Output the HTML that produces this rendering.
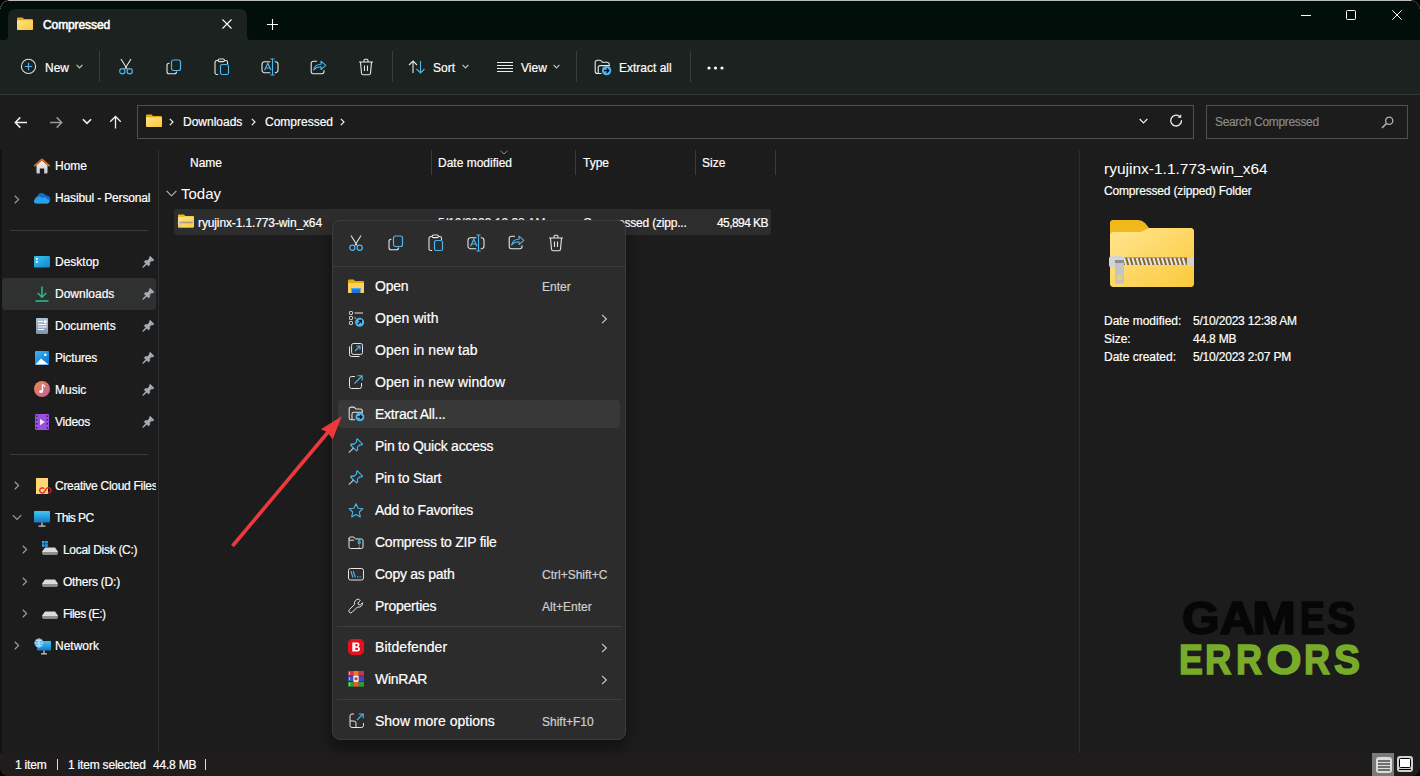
<!DOCTYPE html>
<html><head><meta charset="utf-8">
<style>
*{margin:0;padding:0;box-sizing:border-box}
html,body{width:1420px;height:776px;overflow:hidden;background:#1b1c1b;-webkit-font-smoothing:antialiased;font-family:"Liberation Sans",sans-serif;color:#fff}
.a{position:absolute}
.t{position:absolute;white-space:nowrap;font-size:12px;line-height:12px;color:#fff;-webkit-text-stroke:0.2px currentColor}
svg{position:absolute;overflow:visible}
.sep{position:absolute;width:1px;background:#3b3e3c}
</style></head><body>
<!-- title / tab strip -->
<div class="a" style="left:0;top:0;width:1420px;height:40px;background:#010e0a"></div>
<div class="a" style="left:8px;top:0;width:1404px;height:1px;background:#bcbcbc"></div>
<div class="a" style="left:8px;top:9px;width:239px;height:31px;background:#1c221f;border-radius:7px 7px 0 0"></div><svg style="left:4px;top:36px" width="4" height="4" viewBox="0 0 4 4"><path d="M4 0V4H0A4 4 0 0 0 4 0Z" fill="#1c221f"/></svg><svg style="left:247px;top:36px" width="4" height="4" viewBox="0 0 4 4"><path d="M0 0V4H4A4 4 0 0 1 0 0Z" fill="#1c221f"/></svg>
<!-- command bar -->
<div class="a" style="left:0;top:40px;width:1420px;height:54px;background:#1c221f"></div>
<div class="a" style="left:0;top:94px;width:1420px;height:1px;background:#363837"></div>
<!-- address row -->
<div class="a" style="left:0;top:95px;width:1420px;height:53px;background:#1b1c1b"></div>
<div class="a" style="left:137px;top:105px;width:1057px;height:34px;border:1px solid #4f4f4f"></div>
<div class="a" style="left:1206px;top:105px;width:202px;height:34px;border:1px solid #4f4f4f"></div>
<!-- main -->
<div class="a" style="left:158px;top:150px;width:1px;height:603px;background:#2e2e2e"></div>
<div class="a" style="left:1079px;top:150px;width:1px;height:603px;background:#2e2e2e"></div>
<div class="a" style="left:0;top:150px;width:2px;height:626px;background:#121212"></div>
<!-- status bar -->
<div class="a" style="left:0;top:753px;width:1420px;height:23px;background:#1c1b1b;background-image:repeating-conic-gradient(#211f1f 0 25%,#1b1b1b 0 50%);background-size:2px 2px"></div>

<svg style="left:17px;top:17px" width="16" height="13" viewBox="0 0 16 13">
<defs><linearGradient id="fg" x1="0" y1="0" x2="1" y2="1"><stop offset="0" stop-color="#ffe28a"/><stop offset="1" stop-color="#f9c937"/></linearGradient></defs>
<path d="M1 0.5h4.5l1.5 1.5h8a0.8 0.8 0 0 1 .8.8V12a1 1 0 0 1-1 1H1a1 1 0 0 1-1-1V1.5a1 1 0 0 1 1-1z" fill="#e9a90d"/>
<path d="M0 3.2h16V12a1 1 0 0 1-1 1H1a1 1 0 0 1-1-1z" fill="url(#fg)"/></svg>
<div class="t" style="left:43px;top:19px;-webkit-text-stroke:0.55px #fff;letter-spacing:-0.1px">Compressed</div>
<svg style="left:222px;top:19px" width="10" height="10" viewBox="0 0 10 10"><path d="M0.5 0.5L9.5 9.5M9.5 0.5L0.5 9.5" stroke="#fff" stroke-width="1.1"/></svg>
<svg style="left:267px;top:19px" width="11" height="11" viewBox="0 0 11 11"><path d="M5.5 0V11M0 5.5H11" stroke="#fff" stroke-width="1.1"/></svg>
<div class="a" style="left:1301px;top:15px;width:10px;height:1px;background:#fff"></div>
<div class="a" style="left:1346px;top:10px;width:10px;height:10px;border:1px solid #fff;border-radius:1.5px"></div>
<svg style="left:1392px;top:10px" width="10" height="10" viewBox="0 0 10 10"><path d="M0.3 0.3L9.7 9.7M9.7 0.3L0.3 9.7" stroke="#fff" stroke-width="1"/></svg>

<svg style="left:20px;top:58px" width="17" height="17" viewBox="0 0 17 17"><circle cx="8.5" cy="8.4" r="7.1" fill="none" stroke="#e0e0e0" stroke-width="1.1"/><path d="M8.5 4.8V12.2M4.8 8.5H12.2" stroke="#4cb6ee" stroke-width="1.2"/></svg>
<div class="t" style="left:45px;top:62px">New</div>
<svg style="left:76px;top:64px" width="7" height="5" viewBox="0 0 7 5"><path d="M0.6 0.9L3.5 3.8L6.4 0.9" fill="none" stroke="#c4c4c4" stroke-width="1.2"/></svg>
<div class="sep" style="left:99px;top:51px;height:31px"></div>
<svg style="left:118px;top:58px" width="16" height="17" viewBox="0 0 16 17"><path d="M3 1L9.2 11M13 1L6.8 11" stroke="#e8e8e8" stroke-width="1.1" fill="none"/><circle cx="4.3" cy="13.3" r="2.6" fill="none" stroke="#4cb6ee" stroke-width="1.2"/><circle cx="11.7" cy="13.3" r="2.6" fill="none" stroke="#4cb6ee" stroke-width="1.2"/></svg>
<svg style="left:166px;top:59px" width="16" height="16" viewBox="0 0 16 16"><path d="M3.5 4.2H3a2 2 0 0 0-2 2V12.8a2 2 0 0 0 2 2h5.5a2 2 0 0 0 2-2v-0.4" fill="none" stroke="#e8e8e8" stroke-width="1.1"/><rect x="5.5" y="1" width="9" height="10.5" rx="2" fill="none" stroke="#4cb6ee" stroke-width="1.2"/></svg>
<svg style="left:214px;top:58px" width="16" height="18" viewBox="0 0 16 18"><path d="M4.2 16.5H2.8a1.8 1.8 0 0 1-1.8-1.8V4.3a1.8 1.8 0 0 1 1.8-1.8h1.2M10.5 2.5h1.2a1.8 1.8 0 0 1 1.8 1.8V6" fill="none" stroke="#e8e8e8" stroke-width="1.1"/><rect x="4.2" y="1" width="6.2" height="2.6" rx="1.2" fill="none" stroke="#e8e8e8" stroke-width="1.1"/><rect x="6.5" y="6.5" width="8" height="10" rx="1.8" fill="none" stroke="#4cb6ee" stroke-width="1.2"/></svg>
<svg style="left:261px;top:58px" width="18" height="18" viewBox="0 0 18 18"><path d="M9.3 3.7H3.5a2.5 2.5 0 0 0-2.5 2.5V12.2a2.5 2.5 0 0 0 2.5 2.5H9.3M13.7 3.7H14.5a2.5 2.5 0 0 1 2.5 2.5V12.2a2.5 2.5 0 0 1-2.5 2.5H13.7" fill="none" stroke="#e8e8e8" stroke-width="1.1"/><path d="M3.6 12.3L6.8 5.2L10 12.3M4.8 10H8.8" fill="none" stroke="#4cb6ee" stroke-width="1.15"/><path d="M11.5 1V17M9.4 1H13.6M9.4 17H13.6" stroke="#4cb6ee" stroke-width="1.1"/></svg>
<svg style="left:310px;top:60px" width="17" height="15" viewBox="0 0 17 15"><path d="M7 1.3H3.3A2.1 2.1 0 0 0 1.2 3.4V11.6A2.1 2.1 0 0 0 3.3 13.7H11.9A2.1 2.1 0 0 0 14 11.6V10.3" fill="none" stroke="#e8e8e8" stroke-width="1.1"/><path d="M3.6 10C4.6 6.2 7.4 4.2 11 4.3V1.2L15.8 5.3L11 9.5V6.8C8 6.7 5.6 7.7 3.6 10Z" fill="none" stroke="#4cb6ee" stroke-width="1.1" stroke-linejoin="round"/></svg>
<svg style="left:358px;top:58px" width="16" height="18" viewBox="0 0 16 18"><path d="M1 4H15M6 4V2.5a1.2 1.2 0 0 1 1.2-1.2h1.6A1.2 1.2 0 0 1 10 2.5V4M2.5 4L3.5 15.2a1.8 1.8 0 0 0 1.8 1.6h5.4a1.8 1.8 0 0 0 1.8-1.6L13.5 4M6.5 7.5v5.5M9.5 7.5v5.5" fill="none" stroke="#e8e8e8" stroke-width="1.1"/></svg>
<div class="sep" style="left:392px;top:51px;height:31px"></div>
<svg style="left:408px;top:60px" width="18" height="14" viewBox="0 0 18 14"><path d="M5 13V1.2M1 5L5 1L9 5" fill="none" stroke="#e8e8e8" stroke-width="1.1"/><path d="M12.5 1V12.8M8.5 9L12.5 13L16.5 9" fill="none" stroke="#4cb6ee" stroke-width="1.1"/></svg>
<div class="t" style="left:433px;top:62px">Sort</div>
<svg style="left:462px;top:64px" width="7" height="5" viewBox="0 0 7 5"><path d="M0.6 0.9L3.5 3.8L6.4 0.9" fill="none" stroke="#c4c4c4" stroke-width="1.2"/></svg>
<svg style="left:497px;top:61px" width="16" height="12" viewBox="0 0 16 12"><path d="M0 1.5H16M0 4.5H16M0 7.5H16M0 10.5H16" stroke="#ececec" stroke-width="1.1"/></svg>
<div class="t" style="left:521px;top:62px">View</div>
<svg style="left:553px;top:64px" width="7" height="5" viewBox="0 0 7 5"><path d="M0.6 0.9L3.5 3.8L6.4 0.9" fill="none" stroke="#c4c4c4" stroke-width="1.2"/></svg>
<div class="sep" style="left:576px;top:51px;height:31px"></div>
<svg style="left:594px;top:59px" width="18" height="17" viewBox="0 0 18 17"><path d="M7.5 14.5H3.2A2 2 0 0 1 1.2 12.5V3.2A2 2 0 0 1 3.2 1.2H5.8Q6.6 1.2 7.3 2L8.3 3.2H13.2A2 2 0 0 1 15.2 5.2V7.2" fill="none" stroke="#e8e8e8" stroke-width="1.1"/><path d="M4.2 14.3V8.6A2 2 0 0 1 6.2 6.6H15.3" fill="none" stroke="#e8e8e8" stroke-width="1.1"/><circle cx="12.6" cy="11.6" r="4.7" fill="#4cb6ee"/><path d="M10 11.6H14.8M12.7 9.5L14.8 11.6L12.7 13.7" fill="none" stroke="#000" stroke-width="1.3"/></svg>
<div class="t" style="left:619px;top:62px">Extract all</div>
<div class="sep" style="left:690px;top:51px;height:31px"></div>
<svg style="left:707px;top:66px" width="17" height="4" viewBox="0 0 17 4"><circle cx="2" cy="2" r="1.6" fill="#fff"/><circle cx="8.5" cy="2" r="1.6" fill="#fff"/><circle cx="15" cy="2" r="1.6" fill="#fff"/></svg>

<svg style="left:14px;top:116px" width="14" height="13" viewBox="0 0 14 13"><path d="M13 6.5H1.8M6.3 1.4L1.3 6.5L6.3 11.6" fill="none" stroke="#f0f0f0" stroke-width="1.5"/></svg>
<svg style="left:49px;top:116px" width="14" height="13" viewBox="0 0 14 13"><path d="M1 6.5H12.2M7.7 1.4L12.7 6.5L7.7 11.6" fill="none" stroke="#9a9a9a" stroke-width="1.5"/></svg>
<svg style="left:82px;top:118px" width="10" height="7" viewBox="0 0 10 7"><path d="M0.9 1.2L5 5.3L9.1 1.2" fill="none" stroke="#f0f0f0" stroke-width="1.6"/></svg>
<svg style="left:109px;top:115px" width="13" height="14" viewBox="0 0 13 14"><path d="M6.5 13.5V1.5M1.2 6.8L6.5 1.5L11.8 6.8" fill="none" stroke="#f0f0f0" stroke-width="1.3"/></svg>
<svg style="left:146px;top:114px" width="16" height="13" viewBox="0 0 16 13">
<path d="M1 0.5h4.5l1.5 1.5h8a0.8 0.8 0 0 1 .8.8V12a1 1 0 0 1-1 1H1a1 1 0 0 1-1-1V1.5a1 1 0 0 1 1-1z" fill="#e9a90d"/>
<path d="M0 3.2h16V12a1 1 0 0 1-1 1H1a1 1 0 0 1-1-1z" fill="url(#fg)"/></svg>
<svg style="left:169px;top:118px" width="5" height="8" viewBox="0 0 5 8"><path d="M0.8 0.8L4 4L0.8 7.2" fill="none" stroke="#f0f0f0" stroke-width="1.2"/></svg>
<div class="t" style="left:183px;top:116px">Downloads</div>
<svg style="left:251px;top:118px" width="5" height="8" viewBox="0 0 5 8"><path d="M0.8 0.8L4 4L0.8 7.2" fill="none" stroke="#f0f0f0" stroke-width="1.2"/></svg>
<div class="t" style="left:265px;top:116px">Compressed</div>
<svg style="left:340px;top:118px" width="5" height="8" viewBox="0 0 5 8"><path d="M0.8 0.8L4 4L0.8 7.2" fill="none" stroke="#f0f0f0" stroke-width="1.2"/></svg>
<svg style="left:1139px;top:118px" width="9" height="6" viewBox="0 0 9 6"><path d="M0.7 1L4.5 4.8L8.3 1" fill="none" stroke="#f0f0f0" stroke-width="1.2"/></svg>
<svg style="left:1170px;top:114px" width="13" height="13" viewBox="0 0 13 13"><path d="M9.4 2.3A5.4 5.4 0 1 0 11.5 6.2" fill="none" stroke="#f0f0f0" stroke-width="1.3"/><path d="M11.2 0.2V3.8H7.6Z" fill="#f0f0f0"/></svg>
<div class="t" style="left:1215px;top:116px;color:#8a8a8a;letter-spacing:-0.33px">Search Compressed</div>
<svg style="left:1381px;top:116px" width="13" height="13" viewBox="0 0 13 13"><circle cx="8.2" cy="4.8" r="3.6" fill="none" stroke="#b0b0b0" stroke-width="1.3"/><path d="M5.6 7.4L1 12" stroke="#b0b0b0" stroke-width="1.6"/></svg>

<div class="a" style="left:2px;top:278px;width:154px;height:32px;background:#2f3030;border-radius:3px"></div>
<svg style="left:34px;top:158px" width="16" height="16" viewBox="0 0 16 16"><defs><linearGradient id="hb" x1="0" y1="0" x2="0" y2="1"><stop offset="0" stop-color="#f2f2f2"/><stop offset="1" stop-color="#c9c9c9"/></linearGradient></defs><path d="M2.5 7.2L8 2.6L13.5 7.2V14.6a0.9 0.9 0 0 1-0.9 0.9H10.2V10.6H5.8V15.5H3.4a0.9 0.9 0 0 1-0.9-0.9z" fill="url(#hb)"/><path d="M0.8 7.6L8 1.4L15.2 7.6" fill="none" stroke="#ea6a1f" stroke-width="1.8" stroke-linecap="round" stroke-linejoin="round"/></svg>
<div class="t" style="left:55px;top:160px">Home</div>
<svg style="left:14px;top:195px" width="6" height="9" viewBox="0 0 6 9"><path d="M0.8 0.8L4.6 4.5L0.8 8.2" fill="none" stroke="#9a9a9a" stroke-width="1.2"/></svg>
<svg style="left:34px;top:192px" width="16" height="12" viewBox="0 0 16 12"><path d="M4 11.5A3.5 3.5 0 0 1 3.4 4.6A4.6 4.6 0 0 1 12 3.6A3.6 3.6 0 0 1 12.6 11.5Z" fill="#0f6fc6"/><path d="M2 11.5A2.3 2.3 0 0 1 1.6 7A3.6 3.6 0 0 1 8.2 6.2A2.9 2.9 0 0 1 13.2 7.2A2.2 2.2 0 0 1 13.8 11.5Z" fill="#2aa0ea"/></svg>
<div class="t" style="left:55px;top:192px;letter-spacing:-0.15px">Hasibul - Personal</div>
<div class="a" style="left:10px;top:230px;width:138px;height:1px;background:#3a3a3a"></div>
<svg style="left:34px;top:256px" width="16" height="12" viewBox="0 0 16 12"><defs><linearGradient id="dk" x1="0" y1="0" x2="1" y2="1"><stop offset="0" stop-color="#35c6f2"/><stop offset="1" stop-color="#1482d0"/></linearGradient></defs><rect x="0" y="0" width="16" height="11.5" rx="1.2" fill="url(#dk)"/><rect x="2" y="2" width="1.8" height="1.8" fill="#fff"/><rect x="2" y="5" width="1.8" height="1.8" fill="#fff"/></svg>
<div class="t" style="left:55px;top:256px">Desktop</div>
<svg style="left:142px;top:256px" width="12" height="12" viewBox="0 0 12 12"><path d="M8.2 0.2L12 4L10.9 4.9L9.6 4.8L7.6 6.8L7.8 8.8L6.5 10.1L2.1 5.7L3.4 4.4L5.4 4.6L7.4 2.6L7.3 1.3Z" fill="#a6adb4" stroke="#a6adb4" stroke-width="0.5" stroke-linejoin="round"/><path d="M4.4 7.8L1.2 11" stroke="#a6adb4" stroke-width="1.5" stroke-linecap="round"/></svg>
<svg style="left:35px;top:286px" width="14" height="16" viewBox="0 0 14 16"><path d="M7 0.5V11M2.8 7L7 11.2L11.2 7" fill="none" stroke="#2db88f" stroke-width="1.5"/><path d="M0.5 15H13.5" stroke="#2db88f" stroke-width="1.6"/></svg>
<div class="t" style="left:55px;top:288px">Downloads</div>
<svg style="left:142px;top:288px" width="12" height="12" viewBox="0 0 12 12"><path d="M8.2 0.2L12 4L10.9 4.9L9.6 4.8L7.6 6.8L7.8 8.8L6.5 10.1L2.1 5.7L3.4 4.4L5.4 4.6L7.4 2.6L7.3 1.3Z" fill="#a6adb4" stroke="#a6adb4" stroke-width="0.5" stroke-linejoin="round"/><path d="M4.4 7.8L1.2 11" stroke="#a6adb4" stroke-width="1.5" stroke-linecap="round"/></svg>
<svg style="left:36px;top:318px" width="12" height="16" viewBox="0 0 12 16"><defs><linearGradient id="dc" x1="0" y1="0" x2="0" y2="1"><stop offset="0" stop-color="#b4c4d8"/><stop offset="1" stop-color="#7d93b0"/></linearGradient></defs><rect x="0" y="0" width="12" height="16" rx="1.2" fill="url(#dc)"/><rect x="2" y="3" width="5" height="1" fill="#fff"/><rect x="8" y="2.5" width="2.5" height="2.5" fill="#fff"/><rect x="2" y="6" width="8.5" height="1" fill="#fff"/><rect x="2" y="8.5" width="8.5" height="1" fill="#fff"/><rect x="2" y="11" width="6" height="1" fill="#fff"/></svg>
<div class="t" style="left:55px;top:320px">Documents</div>
<svg style="left:142px;top:320px" width="12" height="12" viewBox="0 0 12 12"><path d="M8.2 0.2L12 4L10.9 4.9L9.6 4.8L7.6 6.8L7.8 8.8L6.5 10.1L2.1 5.7L3.4 4.4L5.4 4.6L7.4 2.6L7.3 1.3Z" fill="#a6adb4" stroke="#a6adb4" stroke-width="0.5" stroke-linejoin="round"/><path d="M4.4 7.8L1.2 11" stroke="#a6adb4" stroke-width="1.5" stroke-linecap="round"/></svg>
<svg style="left:35px;top:351px" width="14" height="14" viewBox="0 0 14 14"><defs><linearGradient id="pc" x1="0" y1="0" x2="1" y2="1"><stop offset="0" stop-color="#3bb5f5"/><stop offset="1" stop-color="#0b6fcf"/></linearGradient></defs><rect width="14" height="14" rx="1" fill="url(#pc)"/><path d="M0.5 13.5L6 7.5L13.5 13.5Z" fill="#fff"/><circle cx="10.3" cy="3.7" r="1.3" fill="#fff"/></svg>
<div class="t" style="left:55px;top:352px;letter-spacing:-0.15px">Pictures</div>
<svg style="left:142px;top:352px" width="12" height="12" viewBox="0 0 12 12"><path d="M8.2 0.2L12 4L10.9 4.9L9.6 4.8L7.6 6.8L7.8 8.8L6.5 10.1L2.1 5.7L3.4 4.4L5.4 4.6L7.4 2.6L7.3 1.3Z" fill="#a6adb4" stroke="#a6adb4" stroke-width="0.5" stroke-linejoin="round"/><path d="M4.4 7.8L1.2 11" stroke="#a6adb4" stroke-width="1.5" stroke-linecap="round"/></svg>
<svg style="left:34px;top:381px" width="16" height="16" viewBox="0 0 16 16"><defs><linearGradient id="mu" x1="0" y1="0" x2="1" y2="1"><stop offset="0" stop-color="#f08a4f"/><stop offset="1" stop-color="#c45a9a"/></linearGradient></defs><circle cx="8" cy="8" r="8" fill="url(#mu)"/><path d="M8.5 3.5V10.2" stroke="#fff" stroke-width="1.4"/><path d="M8.5 3.5Q10.5 4.2 10.8 6" fill="none" stroke="#fff" stroke-width="1.2"/><ellipse cx="7" cy="10.5" rx="1.9" ry="1.6" fill="#fff"/></svg>
<div class="t" style="left:55px;top:384px">Music</div>
<svg style="left:142px;top:384px" width="12" height="12" viewBox="0 0 12 12"><path d="M8.2 0.2L12 4L10.9 4.9L9.6 4.8L7.6 6.8L7.8 8.8L6.5 10.1L2.1 5.7L3.4 4.4L5.4 4.6L7.4 2.6L7.3 1.3Z" fill="#a6adb4" stroke="#a6adb4" stroke-width="0.5" stroke-linejoin="round"/><path d="M4.4 7.8L1.2 11" stroke="#a6adb4" stroke-width="1.5" stroke-linecap="round"/></svg>
<svg style="left:35px;top:414px" width="14" height="16" viewBox="0 0 14 16"><rect width="14" height="16" rx="1" fill="#9b4fe0"/><g fill="#3b1a66"><rect x="1" y="1.5" width="1.5" height="1.5"/><rect x="1" y="5" width="1.5" height="1.5"/><rect x="1" y="9" width="1.5" height="1.5"/><rect x="1" y="13" width="1.5" height="1.5"/><rect x="11.5" y="1.5" width="1.5" height="1.5"/><rect x="11.5" y="5" width="1.5" height="1.5"/><rect x="11.5" y="9" width="1.5" height="1.5"/><rect x="11.5" y="13" width="1.5" height="1.5"/></g><path d="M5 4.8L9.8 8L5 11.2Z" fill="#eee"/></svg>
<div class="t" style="left:55px;top:416px;letter-spacing:-0.25px">Videos</div>
<svg style="left:142px;top:416px" width="12" height="12" viewBox="0 0 12 12"><path d="M8.2 0.2L12 4L10.9 4.9L9.6 4.8L7.6 6.8L7.8 8.8L6.5 10.1L2.1 5.7L3.4 4.4L5.4 4.6L7.4 2.6L7.3 1.3Z" fill="#a6adb4" stroke="#a6adb4" stroke-width="0.5" stroke-linejoin="round"/><path d="M4.4 7.8L1.2 11" stroke="#a6adb4" stroke-width="1.5" stroke-linecap="round"/></svg>
<div class="a" style="left:10px;top:454px;width:138px;height:1px;background:#3a3a3a"></div>
<svg style="left:14px;top:481px" width="6" height="9" viewBox="0 0 6 9"><path d="M0.8 0.8L4.6 4.5L0.8 8.2" fill="none" stroke="#9a9a9a" stroke-width="1.2"/></svg>
<svg style="left:36px;top:478px" width="15" height="16" viewBox="0 0 15 16"><rect width="12" height="16" fill="#fcd774"/><path d="M8.2 10.6A2.6 2.6 0 1 0 8.6 13.6L10.6 10.4A2.6 2.6 0 1 1 11.8 14.8" fill="none" stroke="#ec1c24" stroke-width="1.3"/></svg>
<div class="t" style="left:55px;top:480px;width:101px;overflow:hidden;letter-spacing:-0.28px">Creative Cloud Files</div>
<svg style="left:12px;top:514px" width="10" height="7" viewBox="0 0 10 7"><path d="M0.8 1.2L5 5.4L9.2 1.2" fill="none" stroke="#9a9a9a" stroke-width="1.2"/></svg>
<svg style="left:34px;top:511px" width="16" height="16" viewBox="0 0 16 16"><defs><linearGradient id="pcm" x1="0" y1="0" x2="0" y2="1"><stop offset="0" stop-color="#41c8f4"/><stop offset="1" stop-color="#1577c9"/></linearGradient></defs><rect width="16" height="11.5" rx="0.8" fill="url(#pcm)"/><path d="M8 11.5V15M4.5 15.2H11.5" stroke="#c8c8c8" stroke-width="1.3"/></svg>
<div class="t" style="left:55px;top:512px;letter-spacing:-0.6px">This PC</div>
<svg style="left:22px;top:545px" width="6" height="9" viewBox="0 0 6 9"><path d="M0.8 0.8L4.6 4.5L0.8 8.2" fill="none" stroke="#9a9a9a" stroke-width="1.2"/></svg>
<svg style="left:42px;top:541px" width="16" height="14" viewBox="0 0 16 14"><g fill="#2aa3f0"><rect x="0" y="0" width="2.6" height="2.6"/><rect x="3.2" y="0" width="2.6" height="2.6"/><rect x="0" y="3.2" width="2.6" height="2.6"/><rect x="3.2" y="3.2" width="2.6" height="2.6"/></g><path d="M3 6.5H13L15.5 10V12.8a0.8 0.8 0 0 1-0.8 0.8H1.3a0.8 0.8 0 0 1-0.8-0.8V10Z" fill="#d9d9d9"/><rect x="0.5" y="10" width="15" height="3.6" rx="0.8" fill="#8f8f8f"/><rect x="0.5" y="10" width="15" height="0.8" fill="#efefef"/><rect x="2" y="11.7" width="1.3" height="1" fill="#35c235"/></svg>
<div class="t" style="left:63px;top:544px;letter-spacing:-0.3px">Local Disk (C:)</div>
<svg style="left:22px;top:577px" width="6" height="9" viewBox="0 0 6 9"><path d="M0.8 0.8L4.6 4.5L0.8 8.2" fill="none" stroke="#9a9a9a" stroke-width="1.2"/></svg>
<svg style="left:42px;top:573px" width="16" height="14" viewBox="0 0 16 14"><path d="M3 6.5H13L15.5 10V12.8a0.8 0.8 0 0 1-0.8 0.8H1.3a0.8 0.8 0 0 1-0.8-0.8V10Z" fill="#d9d9d9"/><rect x="0.5" y="10" width="15" height="3.6" rx="0.8" fill="#8f8f8f"/><rect x="0.5" y="10" width="15" height="0.8" fill="#efefef"/><rect x="2" y="11.7" width="1.3" height="1" fill="#35c235"/></svg>
<div class="t" style="left:63px;top:576px;letter-spacing:-0.22px">Others (D:)</div>
<svg style="left:22px;top:609px" width="6" height="9" viewBox="0 0 6 9"><path d="M0.8 0.8L4.6 4.5L0.8 8.2" fill="none" stroke="#9a9a9a" stroke-width="1.2"/></svg>
<svg style="left:42px;top:605px" width="16" height="14" viewBox="0 0 16 14"><path d="M3 6.5H13L15.5 10V12.8a0.8 0.8 0 0 1-0.8 0.8H1.3a0.8 0.8 0 0 1-0.8-0.8V10Z" fill="#d9d9d9"/><rect x="0.5" y="10" width="15" height="3.6" rx="0.8" fill="#8f8f8f"/><rect x="0.5" y="10" width="15" height="0.8" fill="#efefef"/><rect x="2" y="11.7" width="1.3" height="1" fill="#35c235"/></svg>
<div class="t" style="left:63px;top:608px;letter-spacing:-0.55px">Files (E:)</div>
<svg style="left:14px;top:641px" width="6" height="9" viewBox="0 0 6 9"><path d="M0.8 0.8L4.6 4.5L0.8 8.2" fill="none" stroke="#9a9a9a" stroke-width="1.2"/></svg>
<svg style="left:34px;top:638px" width="17" height="17" viewBox="0 0 17 17"><defs><linearGradient id="nw" x1="0" y1="0" x2="0" y2="1"><stop offset="0" stop-color="#41c8f4"/><stop offset="1" stop-color="#1577c9"/></linearGradient></defs><rect x="3" y="3" width="14" height="9.5" rx="0.8" fill="url(#nw)"/><path d="M10 12.5V15.5M7 15.8H13" stroke="#c8c8c8" stroke-width="1.3"/><circle cx="5" cy="5" r="4.6" fill="#5ab8e8"/><path d="M0.6 5H9.4M5 0.4V9.6M2 2Q5 4 8 2M2 8Q5 6 8 8" fill="none" stroke="#d8f0fb" stroke-width="0.8"/></svg>
<div class="t" style="left:55px;top:640px">Network</div>
<div class="t" style="left:190px;top:157px">Name</div>
<div class="a" style="left:431px;top:150px;width:1px;height:25px;background:#3a3a3a"></div>
<div class="a" style="left:575px;top:150px;width:1px;height:25px;background:#3a3a3a"></div>
<div class="a" style="left:695px;top:150px;width:1px;height:25px;background:#3a3a3a"></div>
<div class="a" style="left:775px;top:150px;width:1px;height:25px;background:#3a3a3a"></div>
<svg style="left:500px;top:150px" width="8" height="5" viewBox="0 0 8 5"><path d="M0.5 0.8L4 4L7.5 0.8" fill="none" stroke="#9a9a9a" stroke-width="0.9"/></svg>
<div class="t" style="left:438px;top:157px">Date modified</div>
<div class="t" style="left:583px;top:157px">Type</div>
<div class="t" style="left:702px;top:157px">Size</div>
<svg style="left:166px;top:190px" width="11" height="7" viewBox="0 0 11 7"><path d="M0.6 0.8L5.5 5.8L10.4 0.8" fill="none" stroke="#bdbdbd" stroke-width="1.1"/></svg>
<div class="t" style="left:181px;top:186px;font-size:15px;line-height:15px;-webkit-text-stroke:0">Today</div>
<div class="a" style="left:174px;top:209px;width:597px;height:26px;background:#2d2d2d;border-radius:3px"></div>
<svg style="left:178px;top:214px" width="16" height="14" viewBox="0 0 84 67"><defs><linearGradient id="zbs" x1="0" y1="0" x2="1" y2="1"><stop offset="0" stop-color="#ffe690"/><stop offset="1" stop-color="#fbc93a"/></linearGradient></defs>
<path d="M3 0H28Q32 0 35 3L39 8H80Q84 8 84 12V63Q84 67 80 67H4Q0 67 0 63V3Q0 0 3 0Z" fill="#f1b81c"/>
<path d="M0 16Q0 12 4 12H31L39 8H80Q84 8 84 12V63Q84 67 80 67H4Q0 67 0 63Z" fill="url(#zbs)"/>
<rect x="14" y="37.5" width="64" height="7.5" fill="#8a6428"/><path d="M14.0 38L16.2 45" stroke="#e4e8ec" stroke-width="2.1"/><path d="M18.2 38L20.4 45" stroke="#e4e8ec" stroke-width="2.1"/><path d="M22.4 38L24.6 45" stroke="#e4e8ec" stroke-width="2.1"/><path d="M26.6 38L28.8 45" stroke="#e4e8ec" stroke-width="2.1"/><path d="M30.8 38L33.0 45" stroke="#e4e8ec" stroke-width="2.1"/><path d="M35.0 38L37.2 45" stroke="#e4e8ec" stroke-width="2.1"/><path d="M39.2 38L41.4 45" stroke="#e4e8ec" stroke-width="2.1"/><path d="M43.4 38L45.6 45" stroke="#e4e8ec" stroke-width="2.1"/><path d="M47.6 38L49.8 45" stroke="#e4e8ec" stroke-width="2.1"/><path d="M51.8 38L54.0 45" stroke="#e4e8ec" stroke-width="2.1"/><path d="M56.0 38L58.2 45" stroke="#e4e8ec" stroke-width="2.1"/><path d="M60.2 38L62.4 45" stroke="#e4e8ec" stroke-width="2.1"/><path d="M64.4 38L66.6 45" stroke="#e4e8ec" stroke-width="2.1"/><path d="M68.6 38L70.8 45" stroke="#e4e8ec" stroke-width="2.1"/><path d="M72.8 38L75.0 45" stroke="#e4e8ec" stroke-width="2.1"/><rect x="77" y="37" width="7" height="9" rx="1" fill="#d2d2d2"/><rect x="-1" y="36" width="15" height="11.7" rx="3" fill="#d4d4d4"/><rect x="5" y="41.5" width="9" height="22" rx="1.2" fill="#c4c4c4"/><rect x="7" y="55" width="4.6" height="5" fill="#f8cf55"/><rect x="5" y="40" width="9" height="3" fill="#8d8d8d"/></svg>
<div class="t" style="left:198px;top:217px;letter-spacing:-0.12px">ryujinx-1.1.773-win_x64</div>
<div class="t" style="left:438px;top:217px">5/10/2023 12:38 AM</div>
<div class="t" style="left:583px;top:217px;letter-spacing:-0.2px">Compressed (zipp...</div>
<div class="t" style="left:668px;top:217px;width:100px;text-align:right;letter-spacing:-0.55px">45,894 KB</div>
<div class="t" style="left:1104px;top:161px;font-size:15.5px;line-height:15px;-webkit-text-stroke:0">ryujinx-1.1.773-win_x64</div>
<div class="t" style="left:1104px;top:185px;letter-spacing:-0.17px">Compressed (zipped) Folder</div>
<svg style="left:1110px;top:220px" width="84" height="67" viewBox="0 0 84 67"><defs><linearGradient id="zbb" x1="0" y1="0" x2="1" y2="1"><stop offset="0" stop-color="#ffe690"/><stop offset="1" stop-color="#fbc93a"/></linearGradient></defs>
<path d="M3 0H28Q32 0 35 3L39 8H80Q84 8 84 12V63Q84 67 80 67H4Q0 67 0 63V3Q0 0 3 0Z" fill="#f1b81c"/>
<path d="M0 16Q0 12 4 12H31L39 8H80Q84 8 84 12V63Q84 67 80 67H4Q0 67 0 63Z" fill="url(#zbb)"/>
<rect x="14" y="37.5" width="64" height="7.5" fill="#8a6428"/><path d="M14.0 38L16.2 45" stroke="#e4e8ec" stroke-width="2.1"/><path d="M18.2 38L20.4 45" stroke="#e4e8ec" stroke-width="2.1"/><path d="M22.4 38L24.6 45" stroke="#e4e8ec" stroke-width="2.1"/><path d="M26.6 38L28.8 45" stroke="#e4e8ec" stroke-width="2.1"/><path d="M30.8 38L33.0 45" stroke="#e4e8ec" stroke-width="2.1"/><path d="M35.0 38L37.2 45" stroke="#e4e8ec" stroke-width="2.1"/><path d="M39.2 38L41.4 45" stroke="#e4e8ec" stroke-width="2.1"/><path d="M43.4 38L45.6 45" stroke="#e4e8ec" stroke-width="2.1"/><path d="M47.6 38L49.8 45" stroke="#e4e8ec" stroke-width="2.1"/><path d="M51.8 38L54.0 45" stroke="#e4e8ec" stroke-width="2.1"/><path d="M56.0 38L58.2 45" stroke="#e4e8ec" stroke-width="2.1"/><path d="M60.2 38L62.4 45" stroke="#e4e8ec" stroke-width="2.1"/><path d="M64.4 38L66.6 45" stroke="#e4e8ec" stroke-width="2.1"/><path d="M68.6 38L70.8 45" stroke="#e4e8ec" stroke-width="2.1"/><path d="M72.8 38L75.0 45" stroke="#e4e8ec" stroke-width="2.1"/><rect x="77" y="37" width="7" height="9" rx="1" fill="#d2d2d2"/><rect x="-1" y="36" width="15" height="11.7" rx="3" fill="#d4d4d4"/><rect x="5" y="41.5" width="9" height="22" rx="1.2" fill="#c4c4c4"/><rect x="7" y="55" width="4.6" height="5" fill="#f8cf55"/><rect x="5" y="40" width="9" height="3" fill="#8d8d8d"/></svg>
<div class="t" style="left:1104px;top:315px">Date modified:</div>
<div class="t" style="left:1193px;top:315px;letter-spacing:-0.2px">5/10/2023 12:38 AM</div>
<div class="t" style="left:1104px;top:333px">Size:</div>
<div class="t" style="left:1193px;top:333px;letter-spacing:-0.2px">44.8 MB</div>
<div class="t" style="left:1104px;top:351px">Date created:</div>
<div class="t" style="left:1193px;top:351px;letter-spacing:-0.2px">5/10/2023 2:07 PM</div>
<div class="t" style="left:15px;top:759px;letter-spacing:-0.2px">1 item</div>
<div class="a" style="left:57px;top:759px;width:1px;height:11px;background:#ddd"></div>
<div class="t" style="left:68px;top:759px;letter-spacing:-0.2px">1 item selected</div><div class="t" style="left:153px;top:759px;letter-spacing:-0.2px">44.8 MB</div>
<div class="a" style="left:205px;top:759px;width:1px;height:11px;background:#ddd"></div>
<div class="a" style="left:1372px;top:753px;width:22px;height:23px;background:#7a7a7a"></div>
<div class="a" style="left:1376px;top:757px;width:16px;height:16px;background:#dcdcdc;border-radius:3px"></div>
<svg style="left:1378px;top:760px" width="12" height="10" viewBox="0 0 12 10"><path d="M0 1H12M0 4H12M0 7H12M0 10H12" stroke="#000" stroke-width="1.1"/></svg>
<div class="a" style="left:1397px;top:756px;width:16px;height:16px;background:#d0d0d0;border-radius:3px"></div>
<div class="a" style="left:1399px;top:758px;width:12px;height:10px;background:#fff;border:1px solid #000;border-radius:1.5px"></div>
<div class="a" style="left:1399px;top:769px;width:12px;height:1px;background:#000"></div>
<div class="a" style="left:332px;top:220px;width:294px;height:520px;background:#2c2c2c;border:1px solid #3c3c3c;border-radius:8px;box-shadow:0 8px 16px rgba(0,0,0,0.4)"></div>
<div class="a" style="left:333px;top:266px;width:292px;height:1px;background:#3b3b3b"></div>
<svg style="left:348px;top:234px" width="16" height="18" viewBox="0 0 16 17"><path d="M3 1L9.2 11M13 1L6.8 11" stroke="#e6e6e6" stroke-width="1.1" fill="none"/><circle cx="4.3" cy="13.3" r="2.6" fill="none" stroke="#4cb6ee" stroke-width="1.2"/><circle cx="11.7" cy="13.3" r="2.6" fill="none" stroke="#4cb6ee" stroke-width="1.2"/></svg>
<svg style="left:388px;top:235px" width="16" height="16" viewBox="0 0 16 16"><path d="M3.5 4.2H3a2 2 0 0 0-2 2V12.8a2 2 0 0 0 2 2h5.5a2 2 0 0 0 2-2v-0.4" fill="none" stroke="#e6e6e6" stroke-width="1.1"/><rect x="5.5" y="1" width="9" height="10.5" rx="2" fill="none" stroke="#4cb6ee" stroke-width="1.2"/></svg>
<svg style="left:428px;top:234px" width="16" height="18" viewBox="0 0 16 18"><path d="M4.2 16.5H2.8a1.8 1.8 0 0 1-1.8-1.8V4.3a1.8 1.8 0 0 1 1.8-1.8h1.2M10.5 2.5h1.2a1.8 1.8 0 0 1 1.8 1.8V6" fill="none" stroke="#e6e6e6" stroke-width="1.1"/><rect x="4.2" y="1" width="6.2" height="2.6" rx="1.2" fill="none" stroke="#e6e6e6" stroke-width="1.1"/><rect x="6.5" y="6.5" width="8" height="10" rx="1.8" fill="none" stroke="#4cb6ee" stroke-width="1.2"/></svg>
<svg style="left:467px;top:234px" width="18" height="18" viewBox="0 0 18 18"><path d="M9.3 3.7H3.5a2.5 2.5 0 0 0-2.5 2.5V12.2a2.5 2.5 0 0 0 2.5 2.5H9.3M13.7 3.7H14.5a2.5 2.5 0 0 1 2.5 2.5V12.2a2.5 2.5 0 0 1-2.5 2.5H13.7" fill="none" stroke="#e6e6e6" stroke-width="1.1"/><path d="M3.6 12.3L6.8 5.2L10 12.3M4.8 10H8.8" fill="none" stroke="#4cb6ee" stroke-width="1.15"/><path d="M11.5 1V17M9.4 1H13.6M9.4 17H13.6" stroke="#4cb6ee" stroke-width="1.1"/></svg>
<svg style="left:508px;top:235px" width="17" height="15" viewBox="0 0 17 15"><path d="M7 1.3H3.3A2.1 2.1 0 0 0 1.2 3.4V11.6A2.1 2.1 0 0 0 3.3 13.7H11.9A2.1 2.1 0 0 0 14 11.6V10.3" fill="none" stroke="#e6e6e6" stroke-width="1.1"/><path d="M3.6 10C4.6 6.2 7.4 4.2 11 4.3V1.2L15.8 5.3L11 9.5V6.8C8 6.7 5.6 7.7 3.6 10Z" fill="none" stroke="#4cb6ee" stroke-width="1.1" stroke-linejoin="round"/></svg>
<svg style="left:548px;top:234px" width="16" height="18" viewBox="0 0 16 18"><path d="M1 4H15M6 4V2.5a1.2 1.2 0 0 1 1.2-1.2h1.6A1.2 1.2 0 0 1 10 2.5V4M2.5 4L3.5 15.2a1.8 1.8 0 0 0 1.8 1.6h5.4a1.8 1.8 0 0 0 1.8-1.6L13.5 4M6.5 7.5v5.5M9.5 7.5v5.5" fill="none" stroke="#e6e6e6" stroke-width="1.1"/></svg>
<div class="a" style="left:338px;top:400px;width:282px;height:28px;background:#383838;border-radius:4px"></div>
<svg style="left:348px;top:279px" width="16" height="14" viewBox="0 0 16 14"><path d="M0 1.5Q0 0.5 1 0.5H5.5L7 2H15Q16 2 16 3V13Q16 14 15 14H1Q0 14 0 13Z" fill="#e9a90d"/><path d="M0 4H16V13Q16 14 15 14H1Q0 14 0 13Z" fill="#fbd25a"/><rect x="3.5" y="9" width="9" height="5" rx="0.5" fill="#1a73d9"/><rect x="3.5" y="9" width="9" height="1.3" fill="#4aa3f5"/></svg>
<div class="t" style="left:375px;top:279px;font-size:14px;line-height:14px;letter-spacing:-0.25px">Open</div>
<div class="t" style="left:542px;top:281px;color:#cfcfcf">Enter</div>
<svg style="left:349px;top:311px" width="16" height="16" viewBox="0 0 16 16"><g fill="none" stroke="#e6e6e6" stroke-width="1"><rect x="0.5" y="0.5" width="3" height="3" rx="0.7"/><rect x="0.5" y="5.5" width="3" height="3" rx="0.7"/><rect x="0.5" y="10.5" width="3" height="3" rx="0.7"/><path d="M5.5 2H14M5.5 7H6.8"/></g><circle cx="10.6" cy="11.2" r="4.5" fill="#4cb6ee"/><path d="M8.8 13L12.2 9.6M9.6 9.4H12.4V12.2" fill="none" stroke="#111" stroke-width="1.2"/></svg>
<div class="t" style="left:375px;top:311px;font-size:14px;line-height:14px;letter-spacing:0.05px">Open with</div>
<svg style="left:601px;top:314px" width="7" height="10" viewBox="0 0 7 10"><path d="M1 0.8L5.4 5L1 9.2" fill="none" stroke="#cfcfcf" stroke-width="1.1"/></svg>
<svg style="left:349px;top:343px" width="14" height="14" viewBox="0 0 14 14"><rect x="2.6" y="0.5" width="10.9" height="10.9" rx="1.8" fill="none" stroke="#e6e6e6" stroke-width="1"/><path d="M0.5 3.5V11.5a2 2 0 0 0 2 2H10.5" fill="none" stroke="#e6e6e6" stroke-width="1"/><path d="M6 8L11 3M7.3 3H11V6.7" fill="none" stroke="#4cb6ee" stroke-width="1.1"/></svg>
<div class="t" style="left:375px;top:343px;font-size:14px;line-height:14px;letter-spacing:0.05px">Open in new tab</div>
<svg style="left:349px;top:375px" width="14" height="14" viewBox="0 0 14 14"><path d="M6 1.5H2.5a2 2 0 0 0-2 2V11.5a2 2 0 0 0 2 2H10.5a2 2 0 0 0 2-2V8" fill="none" stroke="#e6e6e6" stroke-width="1"/><path d="M5.5 8.5L13 1M8.5 0.8H13.2V5.5" fill="none" stroke="#4cb6ee" stroke-width="1.1"/></svg>
<div class="t" style="left:375px;top:375px;font-size:14px;line-height:14px;letter-spacing:0.05px">Open in new window</div>
<svg style="left:348px;top:406px" width="17" height="16" viewBox="0 0 18 17"><path d="M7.5 14.5H3.2A2 2 0 0 1 1.2 12.5V3.2A2 2 0 0 1 3.2 1.2H5.8Q6.6 1.2 7.3 2L8.3 3.2H13.2A2 2 0 0 1 15.2 5.2V7.2" fill="none" stroke="#e6e6e6" stroke-width="1.1"/><path d="M4.2 14.3V8.6A2 2 0 0 1 6.2 6.6H15.3" fill="none" stroke="#e6e6e6" stroke-width="1.1"/><circle cx="12.6" cy="11.6" r="4.7" fill="#4cb6ee"/><path d="M10 11.6H14.8M12.7 9.5L14.8 11.6L12.7 13.7" fill="none" stroke="#000" stroke-width="1.3"/></svg>
<div class="t" style="left:375px;top:407px;font-size:14px;line-height:14px;letter-spacing:-0.25px">Extract All...</div>
<svg style="left:348px;top:438px" width="16" height="16" viewBox="0 0 16 16"><path d="M9.2 0.8L14.6 6.2L13.3 7L11.8 6.8L9.4 9.2L9.6 11.8L8.5 12.9L2.6 7L3.7 5.9L6.3 6.1L8.7 3.7L8.5 2.2Z" fill="none" stroke="#4cb6ee" stroke-width="1.1" stroke-linejoin="round"/><path d="M5.5 10L0.8 14.7" stroke="#c8c8c8" stroke-width="1.1"/></svg>
<div class="t" style="left:375px;top:439px;font-size:14px;line-height:14px;letter-spacing:-0.25px">Pin to Quick access</div>
<svg style="left:348px;top:470px" width="16" height="16" viewBox="0 0 16 16"><path d="M9.2 0.8L14.6 6.2L13.3 7L11.8 6.8L9.4 9.2L9.6 11.8L8.5 12.9L2.6 7L3.7 5.9L6.3 6.1L8.7 3.7L8.5 2.2Z" fill="none" stroke="#4cb6ee" stroke-width="1.1" stroke-linejoin="round"/><path d="M5.5 10L0.8 14.7" stroke="#c8c8c8" stroke-width="1.1"/></svg>
<div class="t" style="left:375px;top:471px;font-size:14px;line-height:14px;letter-spacing:-0.25px">Pin to Start</div>
<svg style="left:348px;top:503px" width="16" height="15" viewBox="0 0 16 15"><path d="M8 0.8L10.1 5.2L14.9 5.7L11.3 9L12.3 13.9L8 11.4L3.7 13.9L4.7 9L1.1 5.7L5.9 5.2Z" fill="none" stroke="#4cb6ee" stroke-width="1.1" stroke-linejoin="round"/></svg>
<div class="t" style="left:375px;top:503px;font-size:14px;line-height:14px;letter-spacing:-0.25px">Add to Favorites</div>
<svg style="left:348px;top:535px" width="16" height="14" viewBox="0 0 16 14"><path d="M1 3V12a1.5 1.5 0 0 0 1.5 1.5h11a1.5 1.5 0 0 0 1.5-1.5V5.5a1.5 1.5 0 0 0-1.5-1.5H7.5L5.8 2H2.5A1.5 1.5 0 0 0 1 3.5Z" fill="none" stroke="#e6e6e6" stroke-width="1"/><path d="M1 5.2H6" stroke="#e6e6e6" stroke-width="1"/><path d="M11.2 3V13.5" stroke="#4cb6ee" stroke-width="1.2" stroke-dasharray="1.2 1"/><rect x="10.2" y="6" width="2" height="2.3" fill="none" stroke="#4cb6ee" stroke-width="0.9"/></svg>
<div class="t" style="left:375px;top:535px;font-size:14px;line-height:14px;letter-spacing:-0.25px">Compress to ZIP file</div>
<svg style="left:348px;top:568px" width="16" height="13" viewBox="0 0 16 13"><rect x="0.5" y="0.5" width="15" height="11.5" rx="2" fill="none" stroke="#e6e6e6" stroke-width="1"/><path d="M2.8 3L5 9.5M5.2 3L7.4 9.5" stroke="#4cb6ee" stroke-width="1.1"/><rect x="9" y="8.3" width="1.2" height="1.2" fill="#4cb6ee"/><rect x="11.5" y="8.3" width="1.2" height="1.2" fill="#4cb6ee"/></svg>
<div class="t" style="left:375px;top:567px;font-size:14px;line-height:14px;letter-spacing:-0.25px">Copy as path</div>
<div class="t" style="left:542px;top:569px;color:#cfcfcf">Ctrl+Shift+C</div>
<svg style="left:348px;top:598px" width="16" height="16" viewBox="0 0 16 16"><path d="M10.8 1.2A4 4 0 0 0 6.6 6.3L1.4 11.6a1.9 1.9 0 0 0 2.7 2.7L9.4 9a4 4 0 0 0 5.2-4.3L12.4 6.9L10.6 6.6L9.9 5L12.2 2.6A4 4 0 0 0 10.8 1.2Z" fill="none" stroke="#e6e6e6" stroke-width="1" stroke-linejoin="round"/></svg>
<div class="t" style="left:375px;top:599px;font-size:14px;line-height:14px;letter-spacing:-0.25px">Properties</div>
<div class="t" style="left:542px;top:601px;color:#cfcfcf">Alt+Enter</div>
<div class="a" style="left:337px;top:626px;width:285px;height:1px;background:#3f3f3f"></div>
<svg style="left:348px;top:639px" width="16" height="16" viewBox="0 0 16 16"><path d="M3 0H13L16 3V13L13 16H3L0 13V3Z" fill="#e3101f"/><path d="M5.5 3.5H9.2Q11.5 3.5 11.5 5.6Q11.5 7 10.3 7.6Q12 8.2 12 10.1Q12 12.5 9.4 12.5H5.5ZM7.3 5.1V7.2H9Q9.7 7.2 9.7 6.1Q9.7 5.1 8.9 5.1ZM7.3 8.7V10.9H9.2Q10.1 10.9 10.1 9.8Q10.1 8.7 9.1 8.7Z" fill="#fff" fill-rule="evenodd"/><rect x="4.3" y="3.5" width="1.5" height="9" fill="#fff"/></svg>
<div class="t" style="left:375px;top:640px;font-size:14px;line-height:14px;letter-spacing:0.05px">Bitdefender</div>
<svg style="left:601px;top:643px" width="7" height="10" viewBox="0 0 7 10"><path d="M1 0.8L5.4 5L1 9.2" fill="none" stroke="#cfcfcf" stroke-width="1.1"/></svg>
<svg style="left:348px;top:671px" width="16" height="16" viewBox="0 0 16 16"><rect x="0" y="0" width="5.3" height="4.6" fill="#c8344e"/><rect x="5.3" y="0" width="5.4" height="4.6" fill="#e8782a"/><rect x="10.7" y="0" width="5.3" height="4.6" fill="#c8344e"/><rect x="0" y="5.3" width="5.3" height="4.8" fill="#3b4fc0"/><rect x="10.7" y="5.3" width="5.3" height="4.8" fill="#4a44c0"/><rect x="0" y="10.9" width="5.3" height="4.8" fill="#2f9a3a"/><rect x="5.3" y="10.9" width="5.4" height="4.8" fill="#d8642a"/><rect x="10.7" y="10.9" width="5.3" height="4.8" fill="#2f9a3a"/><rect x="5.3" y="4.6" width="5.4" height="6.3" rx="1" fill="#f0f0f0"/><rect x="6.6" y="6.4" width="2.8" height="2.8" fill="#d83030"/><rect x="1.2" y="1" width="0.9" height="3" fill="#f2d040"/><rect x="1.2" y="6.3" width="0.9" height="3" fill="#f2d040"/><rect x="1.2" y="11.8" width="0.9" height="3" fill="#f2d040"/></svg>
<div class="t" style="left:375px;top:672px;font-size:14px;line-height:14px;letter-spacing:-0.25px">WinRAR</div>
<svg style="left:601px;top:675px" width="7" height="10" viewBox="0 0 7 10"><path d="M1 0.8L5.4 5L1 9.2" fill="none" stroke="#cfcfcf" stroke-width="1.1"/></svg>
<div class="a" style="left:337px;top:699px;width:285px;height:1px;background:#3f3f3f"></div>
<svg style="left:349px;top:713px" width="15" height="15" viewBox="0 0 15 15"><path d="M5 1H3a2 2 0 0 0-2 2v9.5a2 2 0 0 0 2 2h9.5a2 2 0 0 0 2-2V10" fill="none" stroke="#e6e6e6" stroke-width="1"/><path d="M1 8H5a2 2 0 0 1 2 2V14.5" fill="none" stroke="#e6e6e6" stroke-width="1"/><path d="M8 7L14 1M9.8 1H14.2V5.2" fill="none" stroke="#4cb6ee" stroke-width="1.1"/></svg>
<div class="t" style="left:375px;top:714px;font-size:14px;line-height:14px;letter-spacing:0px">Show more options</div>
<div class="t" style="left:542px;top:716px;color:#cfcfcf">Shift+F10</div>
<svg style="left:0;top:0" width="1420" height="776"><path d="M232.5 546L329 431" stroke="#ec393e" stroke-width="3.6"/><path d="M341.8 416.2L320.8 429.3L327.6 432.2L332.6 439.6Z" fill="#ec393e"/></svg>
<svg id="logo" style="left:0;top:0" width="1420" height="776"><g font-family="Liberation Sans" font-weight="bold" font-size="45.5" fill="#060606" stroke="#060606" stroke-width="1.6"><text x="1182.00" y="633.7" textLength="37.60" lengthAdjust="spacingAndGlyphs">G</text><text x="1219.60" y="633.7" textLength="35.40" lengthAdjust="spacingAndGlyphs">A</text><text x="1252.20" y="633.7" textLength="43.80" lengthAdjust="spacingAndGlyphs">M</text><text x="1299.80" y="633.7" textLength="25.20" lengthAdjust="spacingAndGlyphs">E</text><text x="1327.00" y="633.7" textLength="28.60" lengthAdjust="spacingAndGlyphs">S</text></g><g font-family="Liberation Sans" font-weight="bold" font-size="43" fill="#79ab2b" stroke="#79ab2b" stroke-width="1.6"><text x="1179.00" y="673.8" textLength="23.80" lengthAdjust="spacingAndGlyphs">E</text><text x="1205.00" y="673.8" textLength="26.40" lengthAdjust="spacingAndGlyphs">R</text><text x="1236.00" y="673.8" textLength="26.00" lengthAdjust="spacingAndGlyphs">R</text><text x="1266.60" y="673.8" textLength="35.00" lengthAdjust="spacingAndGlyphs">O</text><text x="1304.00" y="673.8" textLength="26.00" lengthAdjust="spacingAndGlyphs">R</text><text x="1334.00" y="673.8" textLength="26.00" lengthAdjust="spacingAndGlyphs">S</text></g></svg>
<svg style="left:0;top:0" width="10" height="10" viewBox="0 0 10 10"><path d="M0 0H9A9 9 0 0 0 0 9Z" fill="#000"/><path d="M9 0.5A8.5 8.5 0 0 0 0.5 9" fill="none" stroke="#8a8a8a" stroke-width="1" stroke-dasharray="1.5 1"/></svg>
<svg style="left:1410px;top:0" width="10" height="10" viewBox="0 0 10 10"><path d="M10 0H1A9 9 0 0 1 10 9Z" fill="#000"/><path d="M1 0.5A8.5 8.5 0 0 1 9.5 9" fill="none" stroke="#6a6a6a" stroke-width="1" stroke-dasharray="1.5 1"/></svg>
<svg style="left:0;top:768px" width="8" height="8" viewBox="0 0 8 8"><path d="M0 0A8 8 0 0 0 8 8H0Z" fill="#000"/></svg>
<svg style="left:1412px;top:768px" width="8" height="8" viewBox="0 0 8 8"><path d="M8 0A8 8 0 0 1 0 8H8Z" fill="#000"/></svg>
</body></html>
